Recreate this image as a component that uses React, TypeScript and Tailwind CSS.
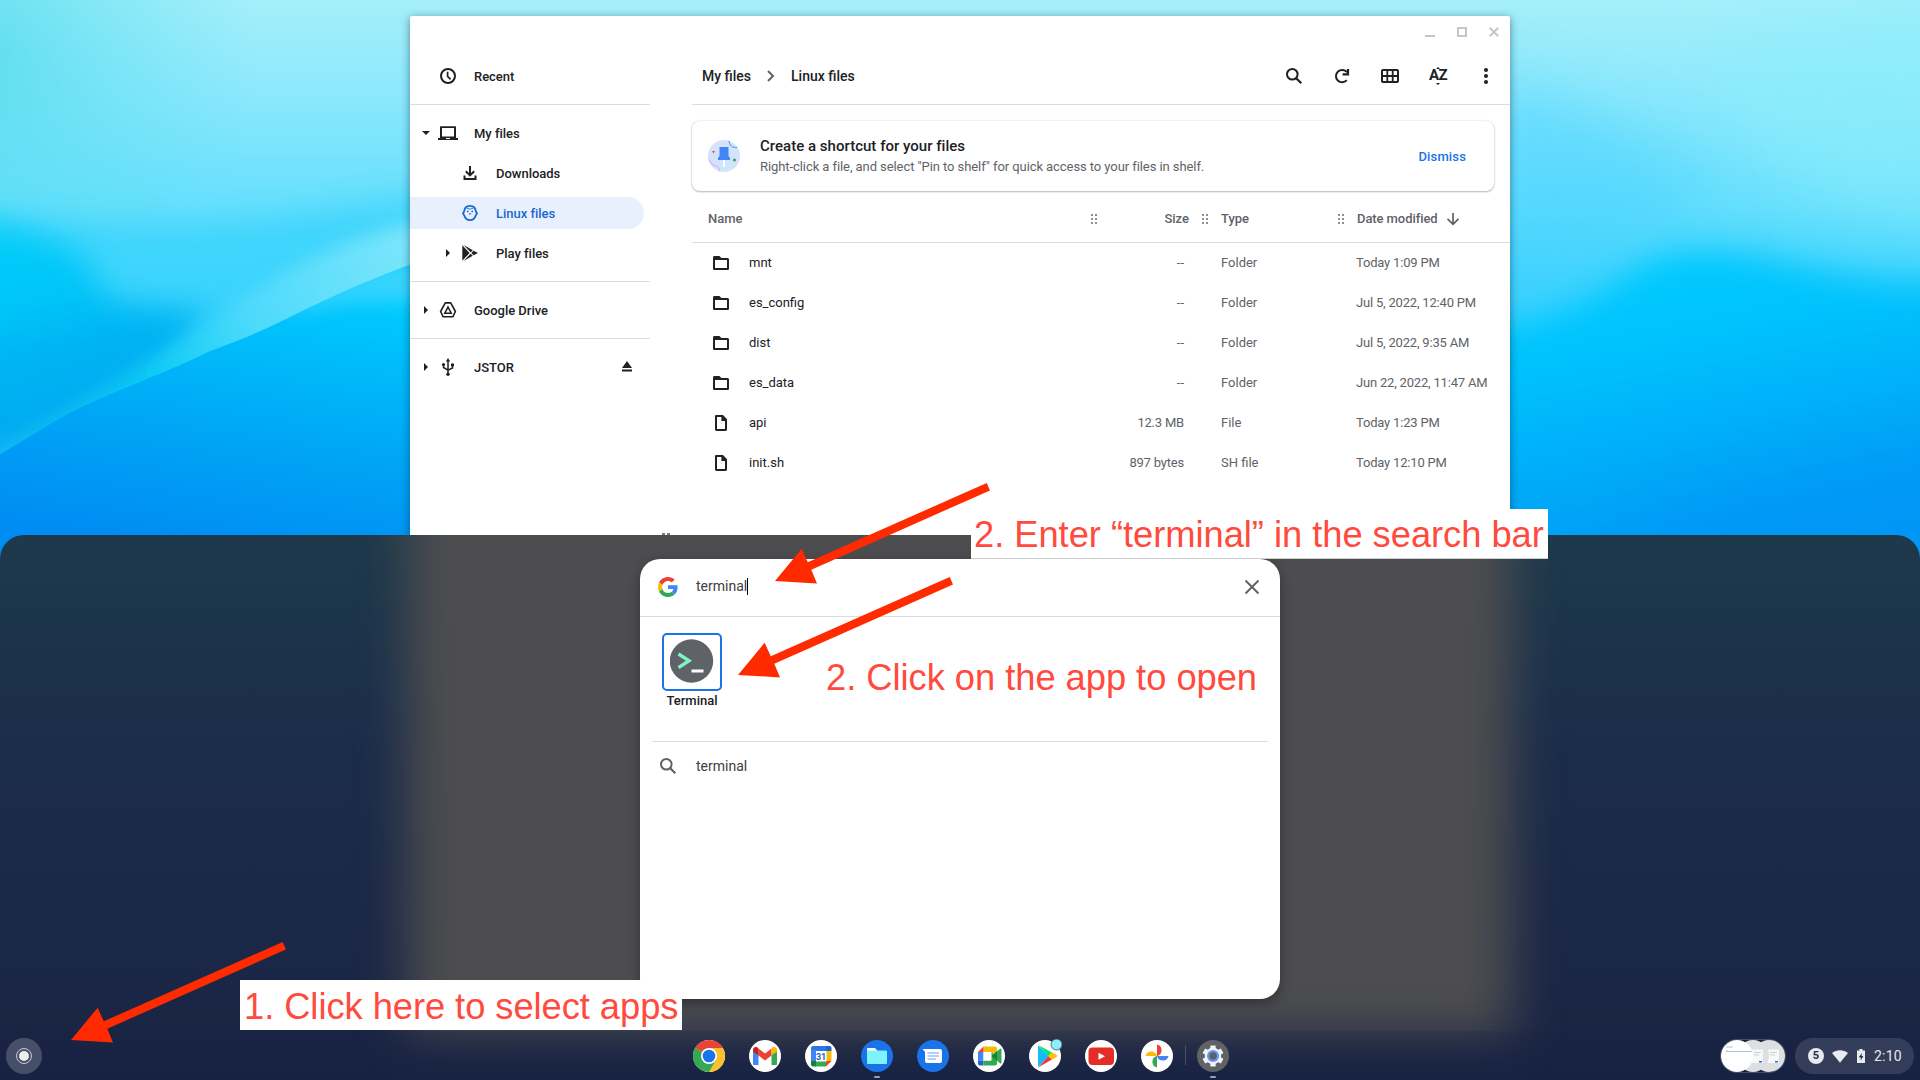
import type { ReactNode } from "react";

/* ---------- wallpaper ---------- */

function Wallpaper() {
  return (
    <svg className="absolute inset-0" width="1920" height="620" viewBox="0 0 1920 620" preserveAspectRatio="none">
      <defs>
        <linearGradient id="sky" x1="0" y1="0" x2="0" y2="1">
          <stop offset="0" stopColor="#a5effa" />
          <stop offset="0.15" stopColor="#8ce8fc" />
          <stop offset="0.33" stopColor="#66dffd" />
          <stop offset="0.45" stopColor="#3dd3fd" />
          <stop offset="0.55" stopColor="#2fd0fd" />
        </linearGradient>
        <linearGradient id="deepLeft" gradientUnits="userSpaceOnUse" x1="330" y1="290" x2="290" y2="560">
          <stop offset="0" stopColor="#00ccff" />
          <stop offset="0.25" stopColor="#00bbfa" />
          <stop offset="0.6" stopColor="#00a5f5" />
          <stop offset="1" stopColor="#008df3" />
        </linearGradient>
        <linearGradient id="midLeft" gradientUnits="userSpaceOnUse" x1="0" y1="220" x2="60" y2="400">
          <stop offset="0" stopColor="#00cffa" />
          <stop offset="0.5" stopColor="#00c4f8" />
          <stop offset="1" stopColor="#00abf0" />
        </linearGradient>
        <linearGradient id="streak" gradientUnits="userSpaceOnUse" x1="0" y1="450" x2="410" y2="230">
          <stop offset="0" stopColor="#04b4ea" />
          <stop offset="0.35" stopColor="#06cbf4" />
          <stop offset="0.6" stopColor="#4fdafb" />
          <stop offset="1" stopColor="#84e8fb" />
        </linearGradient>
        <linearGradient id="deepRight" gradientUnits="userSpaceOnUse" x1="1640" y1="240" x2="1700" y2="550">
          <stop offset="0" stopColor="#00cdff" />
          <stop offset="0.35" stopColor="#00c1fd" />
          <stop offset="0.65" stopColor="#00adf9" />
          <stop offset="1" stopColor="#009af5" />
        </linearGradient>
        <radialGradient id="corner" gradientUnits="userSpaceOnUse" cx="-40" cy="60" r="300">
          <stop offset="0" stopColor="#4fdaea" stopOpacity="0.85" />
          <stop offset="0.5" stopColor="#55ddf0" stopOpacity="0.4" />
          <stop offset="1" stopColor="#5fe0f4" stopOpacity="0" />
        </radialGradient>
        <filter id="b8" x="-20%" y="-20%" width="140%" height="140%"><feGaussianBlur stdDeviation="9" /></filter>
        <filter id="b16" x="-20%" y="-40%" width="140%" height="180%"><feGaussianBlur stdDeviation="16" /></filter>
        <filter id="b40" x="-40%" y="-40%" width="180%" height="180%"><feGaussianBlur stdDeviation="32" /></filter>
        <clipPath id="aboveWave"><path d="M0 0H430V257C370 279 330 297 290 317S230 343 210 351C165 374 85 400 45 427L0 454Z" /></clipPath>
        <clipPath id="belowWave"><path d="M430 257C370 279 330 297 290 317S230 343 210 351C165 374 85 400 45 427L0 454V640H430Z" /></clipPath>
      </defs>
      <rect width="1920" height="620" fill="url(#sky)" />
      <rect width="420" height="360" fill="url(#corner)" />
      <path d="M1480 80C1580 100 1680 150 1720 210L1480 330Z" fill="#45d0ff" opacity="0.5" filter="url(#b40)" />
      <path d="M1700 60L1960 -20V220C1850 220 1760 180 1700 60Z" fill="#8ceefb" opacity="0.6" filter="url(#b40)" />
      <path d="M1440 335C1540 329 1590 305 1640 267C1680 243 1730 250 1800 268C1850 280 1900 288 1980 284V660H1440Z" fill="url(#deepRight)" filter="url(#b16)" />
      <path d="M1620 540C1680 490 1740 470 1960 430V640H1560Z" fill="#0090f5" opacity="0.35" filter="url(#b40)" />
      <g clipPath="url(#belowWave)">
        <rect y="240" width="430" height="400" fill="url(#deepLeft)" />
        <path d="M290 310C340 280 375 266 460 240V306C400 296 330 300 290 316Z" fill="#45d5fd" opacity="0.8" filter="url(#b8)" />
      </g>
      <g clipPath="url(#aboveWave)">
        <path d="M-40 220C60 226 160 234 240 226S370 200 450 200V300H-40Z" fill="#3dd4fc" opacity="0.9" filter="url(#b16)" />
        <path d="M-60 216C20 226 84 244 92 270C96 300 130 312 205 312C190 345 120 400 -60 490Z" fill="url(#midLeft)" filter="url(#b16)" />
        <path d="M-40 350C40 345 130 325 200 318C170 350 60 390 -40 410Z" fill="#00b0f3" opacity="0.6" filter="url(#b16)" />
        <path d="M20 444C120 390 180 345 230 305C290 268 340 235 440 218V300L200 390L20 480Z" fill="url(#streak)" opacity="0.9" filter="url(#b8)" />
      </g>
    </svg>
  );
}

/* ---------- icons ---------- */

type IconProps = { children: ReactNode; size?: number; box?: string; className?: string };
function Icon({ children, size = 20, box = "0 0 20 20", className = "" }: IconProps) {
  return (
    <svg width={size} height={size} viewBox={box} className={"shrink-0 " + className} fill="none">
      {children}
    </svg>
  );
}

const Clock = () => (
  <Icon><circle cx="10" cy="10" r="7" stroke="currentColor" strokeWidth="2" /><path d="M9.6 5.8V10.4L12.6 13.4" stroke="currentColor" strokeWidth="1.7" /></Icon>
);
const Laptop = () => (
  <Icon><path fillRule="evenodd" fill="currentColor" d="M3 3.2H17C17.6 3.2 18 3.6 18 4.2V15H20V17H0V15H2V4.2C2 3.6 2.4 3.2 3 3.2ZM4 5V13.6H16V5ZM8 15V16H12V15Z" /></Icon>
);
const Download = () => (
  <Icon><path d="M10 3V12M5.8 8.2L10 12.4L14.2 8.2" stroke="currentColor" strokeWidth="2" /><path d="M4.5 12.5V16H15.5V12.5" stroke="currentColor" strokeWidth="2" /></Icon>
);
const Penguin = () => (
  <Icon>
    <path d="M10 2.8C13.4 2.8 15.5 5 15.7 8L17 10.500L15.7 12.600C14.8 15.6 12.8 17.2 10 17.2S5.200 15.6 4.300 12.600L3 10.500L4.300 8C4.500 5 6.600 2.8 10 2.8Z" stroke="currentColor" strokeWidth="1.8" />
    <path d="M6.500 5.800L8 5L10 6.400L12 5L13.500 5.800" stroke="currentColor" strokeWidth="0.9" />
    <circle cx="7.8" cy="8.4" r="0.9" fill="currentColor" /><circle cx="12.2" cy="8.4" r="0.9" fill="currentColor" /><path d="M8.6 10.2H11.4L10 12Z" fill="currentColor" />
  </Icon>
);
const PlayMono = () => (
  <Icon><path fill="currentColor" d="M2.3 2.2L9.6 10L2.3 17.8ZM3.6 2L12.8 7.2L10.6 9.3ZM3.6 18L12.8 12.8L10.6 10.7ZM13.6 7.7L18 10L13.6 12.3L11.3 10Z" /></Icon>
);
const Drive = () => (
  <Icon><path d="M7.3 2.9H12.7L17.4 11.5L14.8 16.8H5.2L2.6 11.5Z" stroke="currentColor" strokeWidth="1.6" strokeLinejoin="round" /><path d="M10 7L13.2 13.2H6.8Z" stroke="currentColor" strokeWidth="1.6" /></Icon>
);
const Usb = () => (
  <Icon><path d="M10 3V17M5.5 8V10.5L10 13.2L14.5 11V8" stroke="currentColor" strokeWidth="1.5" /><path fill="currentColor" d="M10 1L12.2 4.4H7.8ZM13 6.4H16V9.2H13Z" /><circle cx="5.5" cy="7.6" r="1.6" fill="currentColor" /><circle cx="10" cy="17.2" r="1.7" fill="currentColor" /></Icon>
);
const Eject = () => (
  <Icon><path fill="currentColor" d="M10 4L15 11H5ZM5 12.6H15V14.6H5Z" /></Icon>
);
const Folder = () => (
  <Icon><path fillRule="evenodd" fill="currentColor" d="M3.6 3H8.4L10.4 4.9H16.4C17.4 4.9 18 5.5 18 6.4V15.4C18 16.4 17.4 17 16.4 17H3.6C2.6 17 2 16.4 2 15.4V4.6C2 3.6 2.6 3 3.6 3ZM4 7V15H16V7Z" /></Icon>
);
const FileIcon = () => (
  <Icon><path fillRule="evenodd" fill="currentColor" d="M5.5 2H12L16 6.3V16.6C16 17.5 15.5 18 14.5 18H5.5C4.5 18 4 17.5 4 16.6V3.4C4 2.5 4.5 2 5.5 2ZM6 4V16H14V8H10.4V4Z" /></Icon>
);
const Search = ({ className = "" }: { className?: string }) => (
  <Icon className={className}><circle cx="8.3" cy="8.3" r="5.3" stroke="currentColor" strokeWidth="2" /><path d="M12.2 12.2L17.3 17.3" stroke="currentColor" strokeWidth="2.2" /></Icon>
);
const Refresh = () => (
  <Icon><path d="M14.8 14.200A6.200 6.200 0 1 1 15 6.200" stroke="currentColor" strokeWidth="2" /><path d="M16 3V8.3H10.6" stroke="currentColor" strokeWidth="2.2" /></Icon>
);
const Grid = () => (
  <Icon><rect x="2" y="4" width="16" height="12" rx="1" stroke="currentColor" strokeWidth="2" /><path d="M7.3 4V16M12.7 4V16M2 10H18" stroke="currentColor" strokeWidth="1.8" /></Icon>
);
const Dots = () => (
  <Icon><circle cx="10" cy="4" r="2" fill="currentColor" /><circle cx="10" cy="10" r="2" fill="currentColor" /><circle cx="10" cy="16" r="2" fill="currentColor" /></Icon>
);
const SortAZ = () => (
  <span className="flex h-5 w-5 flex-col items-center justify-center">
    <svg width="4" height="2" viewBox="0 0 4 2" className="shrink-0"><path d="M0 2L2 0L4 2Z" fill="currentColor" /></svg>
    <span className="text-[15px] leading-[13px] font-bold tracking-[-0.5px]">AZ</span>
    <svg width="4" height="2" viewBox="0 0 4 2" className="mt-px shrink-0"><path d="M0 0L2 2L4 0Z" fill="currentColor" /></svg>
  </span>
);

function Grip() {
  return (
    <svg width="6" height="10" viewBox="0 0 6 10" fill="#8c9094" className="shrink-0">
      <path d="M0 0h2v2H0zM4 0h2v2H4zM0 4h2v2H0zM4 4h2v2H4zM0 8h2v2H0zM4 8h2v2H4z" />
    </svg>
  );
}

/* ---------- files window ---------- */

type NavProps = { icon: ReactNode; label: string; caret?: "right" | "down"; nested?: boolean; active?: boolean; trailing?: ReactNode };
function NavItem({ icon, label, caret, nested, active, trailing }: NavProps) {
  return (
    <div className={"flex h-8 items-center rounded-r-full pr-[7px] " + (nested ? "pl-[34px] " : "pl-3 ") + (active ? "bg-[#e8f0fe] text-[#1967d2]" : "text-[#202124]")}>
      <span className="flex w-4 shrink-0">
        {caret === "right" && <svg width="8" height="8" viewBox="0 0 8 8"><path d="M2 0L6 4L2 8Z" fill="currentColor" /></svg>}
        {caret === "down" && <svg width="8" height="8" viewBox="0 0 8 8"><path d="M0 2H8L4 6Z" fill="currentColor" /></svg>}
      </span>
      {icon}
      <span className="flex-1 pt-0.5 pl-4 text-[13px] font-medium tracking-[-0.02px]">{label}</span>
      {trailing}
    </div>
  );
}

function NavGroup({ children, last }: { children: ReactNode; last?: boolean }) {
  return <div className={"flex flex-col gap-2 py-3 pr-1.5 " + (last ? "" : "mb-px shadow-[0_1px_0_#dadce0]")}>{children}</div>;
}

function Sidebar() {
  return (
    <div className="w-[240px] shrink-0 pt-8">
      <NavGroup><NavItem icon={<Clock />} label="Recent" /></NavGroup>
      <NavGroup>
        <NavItem icon={<Laptop />} label="My files" caret="down" />
        <NavItem icon={<Download />} label="Downloads" nested />
        <NavItem icon={<Penguin />} label="Linux files" nested active />
        <NavItem icon={<PlayMono />} label="Play files" nested caret="right" />
      </NavGroup>
      <NavGroup><NavItem icon={<Drive />} label="Google Drive" caret="right" /></NavGroup>
      <NavGroup last><NavItem icon={<Usb />} label="JSTOR" caret="right" trailing={<Eject />} /></NavGroup>
    </div>
  );
}

const FILES = [
  { name: "mnt", size: "--", type: "Folder", date: "Today 1:09 PM" },
  { name: "es_config", size: "--", type: "Folder", date: "Jul 5, 2022, 12:40 PM" },
  { name: "dist", size: "--", type: "Folder", date: "Jul 5, 2022, 9:35 AM" },
  { name: "es_data", size: "--", type: "Folder", date: "Jun 22, 2022, 11:47 AM" },
  { name: "api", size: "12.3 MB", type: "File", date: "Today 1:23 PM" },
  { name: "init.sh", size: "897 bytes", type: "SH file", date: "Today 12:10 PM" },
];

function PinArt() {
  return (
    <svg width="32" height="32" viewBox="0 0 32 32" className="shrink-0">
      <defs><clipPath id="pin"><circle cx="16" cy="16" r="16" /></clipPath></defs>
      <g clipPath="url(#pin)" fill="none">
        <rect width="32" height="32" fill="#d2e3fc" />
        <path d="M21 0C21 6 25 8 29 7.5" stroke="#4285f4" strokeWidth="0.9" />
        <path d="M-1 19C2 19 2 23 5 25C8 25.500 12 27 11.500 32" stroke="#f48fea" strokeWidth="0.9" />
        <path d="M11.500 7H20.500V16L22 18V20H10V18L11.500 16Z" fill="#4285f4" />
        <path d="M16 20V27" stroke="#fff" strokeWidth="1.800" />
        <path d="M4 11H7L5.500 13.500Z" fill="#ea4335" />
        <circle cx="26.500" cy="20" r="1.500" fill="#34a853" />
      </g>
    </svg>
  );
}

function FilesWindow() {
  return (
    <div className="absolute top-4 left-[410px] flex h-[560px] w-[1100px] rounded-t-[2px] bg-white shadow-[0_2px_8px_rgba(0,30,60,0.5)]">
      <Sidebar />
      <div className="ml-[42px] flex flex-1 flex-col">
        <div className="flex h-8 items-end justify-end gap-[22px] pr-[11px] pb-[11px]">
          <svg width="10" height="10"><path d="M0 9H10" stroke="#c4c6c8" strokeWidth="2" /></svg>
          <svg width="10" height="10"><rect x="1" y="1" width="8" height="8" fill="none" stroke="#c4c6c8" strokeWidth="2" /></svg>
          <svg width="10" height="10"><path d="M0.700 0.700L9.300 9.300M9.300 0.700L0.700 9.300" stroke="#c4c6c8" strokeWidth="2" /></svg>
        </div>
        <div className="flex h-14 items-center pl-2.5 text-sm font-medium text-[#202124]">
          <span>My files</span>
          <svg width="8" height="12" viewBox="0 0 8 12" className="mx-4"><path d="M1 1L6 6L1 11" fill="none" stroke="#5f6368" strokeWidth="2" /></svg>
          <span className="flex-1">Linux files</span>
          <div className="flex gap-7 pr-[14px]"><Search /><Refresh /><Grid /><SortAZ /><Dots /></div>
        </div>
        <div className="border-b border-[#dadce0]" />
        <div className="mt-4 mr-4 flex h-[70px] items-center rounded-lg bg-white pl-4 shadow-[0_1px_2px_rgba(60,64,67,0.35),0_0_2px_rgba(60,64,67,0.2)]">
          <PinArt />
          <div className="flex-1 pl-5">
            <div className="text-[15px] leading-[22px] font-medium tracking-[0.02px] text-[#202124]">Create a shortcut for your files</div>
            <div className="text-[13px] leading-5 tracking-[-0.075px] text-[#5f6368]">Right-click a file, and select "Pin to shelf" for quick access to your files in shelf.</div>
          </div>
          <span className="pt-0.5 pr-7 text-[13px] font-medium tracking-[0.15px] text-[#1a73e8]">Dismiss</span>
        </div>
        <div className="flex h-[52px] items-center border-b border-[#dadce0] pt-[5px] pl-4 text-[13px] font-medium text-[#5f6368]">
          <span className="w-[383px]">Name</span>
          <Grip />
          <span className="w-[92px] text-right">Size</span>
          <span className="flex w-[32px] justify-end pr-[13px]"><Grip /></span>
          <span className="w-[117px]">Type</span>
          <Grip />
          <span className="pl-[13px] tracking-[-0.08px]">Date modified</span>
          <svg width="14" height="14" viewBox="0 0 14 14" className="ml-2"><path d="M7 1V12M1.500 6.800L7 12.300L12.500 6.800" fill="none" stroke="#5f6368" strokeWidth="1.700" /></svg>
        </div>
        {FILES.map((f) => (
          <div key={f.name} className="flex h-10 items-center pl-[19px] text-[13px] text-[#5f6368]">
            <span className="text-[#202124]">{f.type === "Folder" ? <Folder /> : <FileIcon />}</span>
            <span className="w-[318px] pl-[18px] text-[#202124]">{f.name}</span>
            <span className={"w-[135px] text-right " + (f.type === "Folder" ? "" : "tracking-[-0.2px]")}>{f.size}</span>
            <span className="w-[172px] pl-[37px]">{f.type}</span>
            <span className="tracking-[-0.19px]">{f.date}</span>
          </div>
        ))}
      </div>
    </div>
  );
}

/* ---------- launcher ---------- */

function GoogleG() {
  return (
    <svg width="20" height="20" viewBox="0 0 48 48">
      <path fill="#EA4335" d="M24 9.500c3.540 0 6.710 1.220 9.210 3.600l6.850-6.850C35.900 2.380 30.470 0 24 0 14.620 0 6.510 5.380 2.560 13.220l7.980 6.190C12.430 13.720 17.740 9.500 24 9.500z" />
      <path fill="#4285F4" d="M46.980 24.550c0-1.570-.15-3.090-.38-4.550H24v9.020h12.940c-.58 2.960-2.260 5.480-4.780 7.180l7.730 6c4.510-4.180 7.090-10.360 7.090-17.650z" />
      <path fill="#FBBC05" d="M10.530 28.590c-.48-1.450-.76-2.990-.76-4.590s.27-3.140.76-4.590l-7.980-6.190C.92 16.460 0 20.120 0 24c0 3.880.92 7.540 2.560 10.780l7.970-6.190z" />
      <path fill="#34A853" d="M24 48c6.480 0 11.930-2.130 15.890-5.810l-7.730-6c-2.150 1.450-4.920 2.300-8.160 2.300-6.260 0-11.570-4.220-13.470-9.910l-7.980 6.190C6.510 42.620 14.620 48 24 48z" />
    </svg>
  );
}

function SearchPanel() {
  return (
    <div className="absolute top-[24px] left-[640px] flex h-[440px] w-[640px] flex-col rounded-[20px] bg-white text-[#202124] shadow-[0_4px_12px_rgba(0,0,0,0.35)]">
      <div className="flex h-[58px] items-center border-b border-[#dadce0] pr-5 pb-0.5 pl-[18px]">
        <GoogleG />
        <span className="pb-0.5 pl-[18px] text-sm text-[#3c4043]">terminal</span>
        <span className="h-[17px] w-px bg-black" />
        <svg width="16" height="16" viewBox="0 0 16 16" className="ml-auto"><path d="M1.500 1.500L14.500 14.500M14.500 1.500L1.500 14.500" stroke="#5f6368" strokeWidth="2" /></svg>
      </div>
      <div className="mx-3 flex h-[125px] flex-col border-b border-[#dadce0] pt-4 pl-[10px]">
        <div className="flex h-[58px] w-[60px] items-center justify-center rounded-[5px] border-2 border-[#1a73e8] pb-0.5">
          <svg width="44" height="44" viewBox="0 0 44 44" className="shrink-0">
            <circle cx="21.500" cy="22" r="21.700" fill="#5f6368" />
            <path d="M8.500 15L19 21.800L8.500 28.600" fill="none" stroke="#7df5c2" strokeWidth="3.400" />
            <path d="M21.500 32H33.500" stroke="#fff" strokeWidth="3" />
          </svg>
        </div>
        <span className="w-[60px] pt-px text-center text-[13px] leading-[18px] font-medium">Terminal</span>
      </div>
      <div className="flex h-12 items-center pl-[18px]">
        <Search className="text-[#5f6368]" />
        <span className="pl-[18px] text-sm text-[#3c4043]">terminal</span>
      </div>
    </div>
  );
}

function Launcher() {
  return (
    <div className="absolute top-[535px] left-0 h-[545px] w-[1920px] overflow-hidden rounded-t-[24px] bg-gradient-to-b from-[#1d394b] via-[#1b2c4a] via-40% to-[#1a2443]">
      <div className="absolute -top-20 left-[408px] h-[582px] w-[1104px] bg-[#4d4d4f] blur-[24px]" />
      <SearchPanel />
    </div>
  );
}

/* ---------- shelf ---------- */

function AppIcon({ children, bg = "#ffffff", running }: { children: ReactNode; bg?: string; running?: boolean }) {
  return (
    <div className="flex w-14 flex-col items-center pt-2">
      <svg width="34" height="34" viewBox="-1 -1 34 34"><circle cx="16" cy="16" r="16" fill={bg} />{children}</svg>
      {running && <span className="mt-[3px] h-0.5 w-1.5 rounded-full bg-[#9aa0b0]" />}
    </div>
  );
}

function ShelfApps() {
  return (
    <div className="flex h-12">
      <AppIcon>
        <path d="M16 16L2.140 8A16 16 0 0 1 29.860 8Z" fill="#ea4335" />
        <path d="M16 16L2.140 8A16 16 0 0 0 16 32L22.500 20Z" fill="#34a853" />
        <path d="M16 16L16 32A16 16 0 0 0 29.860 8H16Z" fill="#fbc02d" />
        <path d="M9.070 20L16 32L22.930 20Z" fill="#34a853" />
        <circle cx="16" cy="16" r="8" fill="#fff" /><circle cx="16" cy="16" r="6.300" fill="#1a73e8" />
      </AppIcon>
      <AppIcon>
        <path d="M4 9V23.500C4 24.500 4.500 25 5.500 25H9.500V13Z" fill="#4285f4" />
        <path d="M28 9V23.500C28 24.500 27.500 25 26.500 25H22.500V13Z" fill="#34a853" />
        <path d="M9.500 8.500L16 13.500L22.500 8.500V15.500L16 20.400L9.500 15.500Z" fill="#ea4335" />
        <path d="M4 10C4 7 7.500 6 9.500 8.500V15.500L4 11.500Z" fill="#c5221f" />
        <path d="M28 10C28 7 24.500 6 22.500 8.500V15.500L28 11.500Z" fill="#fbbc04" />
      </AppIcon>
      <AppIcon>
        <path d="M8 6H21V11H6V8Q6 6 8 6Z" fill="#2f75e6" /><path d="M6 10H11V21H6Z" fill="#4285f4" />
        <path d="M21 6H24.500Q26.500 6 26.500 8V11H21Z" fill="#1967d2" /><path d="M21 11H26.500V21H21Z" fill="#fbbc04" />
        <path d="M6 21H11V26.500H8Q6 26.500 6 24.500Z" fill="#188038" /><path d="M11 21H21V26.500H11Z" fill="#34a853" />
        <path d="M21 21H26.500L21 26.500Z" fill="#ea4335" />
        <rect x="11" y="11" width="10.500" height="10.500" fill="#fff" />
        <text x="16.100" y="19.500" fontSize="9" fontWeight="700" fontFamily="Roboto, sans-serif" textAnchor="middle" fill="#1967d2">31</text>
      </AppIcon>
      <AppIcon bg="#1a73e8" running>
        <path d="M6 9Q6 8 7 8H14L16.500 11H6Z" fill="#fff" />
        <path d="M6 10.500H25Q26 10.500 26 11.500V23Q26 24 25 24H7Q6 24 6 23Z" fill="#7df3fb" />
      </AppIcon>
      <AppIcon bg="#1a73e8">
        <path d="M5.500 9H23Q25 9 25 11V21Q25 23 23 23H10Q8 23 8 21V12Z" fill="#fff" />
        <path d="M10.500 13H22M10.500 16H22M10.500 19H19" stroke="#6aa0f2" strokeWidth="1.200" />
      </AppIcon>
      <AppIcon>
        <path d="M10.500 6.500H22Q24 6.500 24 8.500V13H18V12H10.500Z" fill="#fbbc04" /><path d="M5 12L10.500 6.500V12Z" fill="#ea4335" />
        <path d="M5 12H10.500V20.500H5Z" fill="#4285f4" /><path d="M5 20.500H10.500V25.500H7Q5 25.500 5 23.500Z" fill="#1967d2" />
        <path d="M10.500 20.500H18V12L24 16V23.500Q24 25.500 22 25.500H10.500Z" fill="#34a853" />
        <path d="M18.500 16L27 8.800Q28.500 8 28.500 9.500V22.500Q28.500 24 27 23.200Z" fill="#34a853" /><path d="M18.500 16L24 11.300V20.700Z" fill="#188038" />
        <rect x="10.500" y="12" width="8" height="8.500" fill="#fff" />
      </AppIcon>
      <AppIcon>
        <path d="M9 5.500L20 16L9 27Z" fill="#16bdf5" /><path d="M9 5L23 12.500L19.500 16Z" fill="#00e676" />
        <path d="M9 27.500L23 19.500L19.500 16Z" fill="#e53950" /><path d="M22.800 12.300L28 15.300Q29 16 28 16.700L22.800 19.700L19 16Z" fill="#ffc107" />
        <circle cx="27.500" cy="4.500" r="5.500" fill="#8ceefb" stroke="#34505f" strokeWidth="0.800" />
      </AppIcon>
      <AppIcon>
        <rect x="3.500" y="7.500" width="25.500" height="17.500" rx="4" fill="#e52d27" /><path d="M13.500 12.700L20 16.200L13.500 19.700Z" fill="#fff" />
      </AppIcon>
      <AppIcon>
        <path d="M16 16V4.500A5.900 5.900 0 0 1 16 16Z" fill="#ea4335" /><path d="M16 16H27.500A5.900 5.900 0 0 1 16 16Z" fill="#4285f4" />
        <path d="M16 16V27.500A5.900 5.900 0 0 1 16 16Z" fill="#34a853" /><path d="M16 16H4.500A5.900 5.900 0 0 1 16 16Z" fill="#fbbc04" />
      </AppIcon>
      <span className="-mr-px mt-3.5 h-5 w-px bg-[#4a5268]" />
      <AppIcon bg="#5f6368" running>
        <g fill="#f1f3f4">
          <circle cx="16" cy="16" r="8.200" />
          {[0, 60, 120, 180, 240, 300].map((a) => (
            <rect key={a} x="13.300" y="5.500" width="5.400" height="6" rx="0.600" transform={`rotate(${a} 16 16)`} />
          ))}
        </g>
        <circle cx="16" cy="16" r="6" fill="#5e97f6" /><circle cx="16" cy="16" r="3.700" fill="#5f6368" />
      </AppIcon>
    </div>
  );
}

function HoldingThumb({ cls, doc }: { cls: string; doc?: boolean }) {
  return (
    <svg width="32" height="32" viewBox="0 0 32 32" className={"shrink-0 " + cls}>
      <circle cx="16" cy="16" r="16" fill={doc ? "#dddfe1" : "#ffffff"} />
      {doc ? (
        <>
          <rect x="13" y="9.500" width="13" height="13.500" fill="#f6f8fa" />
          <path d="M17 12.500H24M17 15H22" stroke="#c3c7cb" strokeWidth="0.800" />
          <rect x="22" y="21" width="3" height="1.500" fill="#1a73e8" />
        </>
      ) : (
        <path d="M5 7H12M6 10V12M5 11.500H31" stroke="#a9c3dd" strokeWidth="1" />
      )}
    </svg>
  );
}

function Shelf() {
  return (
    <div className="absolute top-[1031px] left-0 flex h-[49px] w-[1920px] items-start justify-between bg-gradient-to-b from-[#141f42]/15 to-[#141f42]/50">
      <div className="flex w-[680px] pt-[7px] pl-1.5">
        <div className="flex h-9 w-9 items-center justify-center rounded-full bg-white/20">
          <div className="flex h-4 w-4 items-center justify-center rounded-full border border-[#c8ccd6]"><div className="h-2.5 w-2.5 rounded-full bg-[#eceef3]" /></div>
        </div>
      </div>
      <ShelfApps />
      <div className="flex w-[679px] items-center justify-end pt-[7px] pr-1.5 text-[#e8eaed]">
        <div className="flex rounded-full border border-white/20">
          <HoldingThumb cls="relative z-20" />
          <HoldingThumb cls="relative z-10 -ml-4" doc />
          <HoldingThumb cls="-ml-4" doc />
        </div>
        <div className="ml-[9px] flex h-9 w-[119px] items-center rounded-full bg-white/12 pl-[13px]">
          <span className="flex h-4 w-4 items-center justify-center rounded-full bg-[#e8eaed] text-[11px] font-bold text-[#202a48]">5</span>
          <svg width="16" height="13" viewBox="0 0 16 13" className="ml-2"><path d="M0 3C4.500 -0.700 11.500 -0.700 16 3L8 12.800Z" fill="#e8eaed" /></svg>
          <svg width="8" height="14" viewBox="0 0 8 14" className="ml-[9px]"><path d="M2.500 0H5.500V1.500H8V14H0V1.500H2.500Z" fill="#e8eaed" /><path d="M5 4L1.800 8.300H3.700V11.500L6.300 7H4.500Z" fill="#202a48" /></svg>
          <span className="ml-[9px] text-sm tracking-[0.2px]">2:10</span>
        </div>
      </div>
    </div>
  );
}

/* ---------- tutorial annotations ---------- */

function Arrow({ place }: { place: string }) {
  return (
    <svg width="220" height="106" viewBox="0 -100 220 106" className={"absolute " + place}>
      <path d="M0 0L26.600 -32.300L32.800 -18.700L211.700 -98L215 -90.600L36.300 -11.300L42 2.400Z" fill="#ff2a00" />
    </svg>
  );
}

const noteText = "absolute flex items-center whitespace-nowrap text-[36.3px] text-[#ff4a3d] font-['Liberation_Sans',Arial,sans-serif] ";

export default function App() {
  return (
    <div className="relative h-[1080px] w-[1920px] overflow-hidden bg-[#1a2443] font-[Roboto,sans-serif]">
      <Wallpaper />
      <FilesWindow />
      <svg width="10" height="2" className="absolute top-[533px] left-[661px]"><path d="M1 1H4M6 1H9" stroke="#77797c" strokeWidth="2" /></svg>
      <Launcher />
      <Shelf />
      <div className={noteText + "top-[509px] left-[971px] h-[50px] w-[577px] border-b border-[#cfd0d1] bg-white pt-[4px] pl-[3px] tracking-[-0.03px]"}>2. Enter “terminal” in the search bar</div>
      <div className={noteText + "top-[653px] left-[826px] h-[50px] tracking-[-0.03px]"}>2. Click on the app to open</div>
      <div className={noteText + "top-[980px] left-[240px] h-[50px] w-[442px] bg-white pt-[4px] pl-[4px] tracking-[-0.05px]"}>1. Click here to select apps</div>
      <Arrow place="top-[481px] left-[775px]" />
      <Arrow place="top-[575px] left-[738px]" />
      <Arrow place="top-[940px] left-[71px]" />
    </div>
  );
}
